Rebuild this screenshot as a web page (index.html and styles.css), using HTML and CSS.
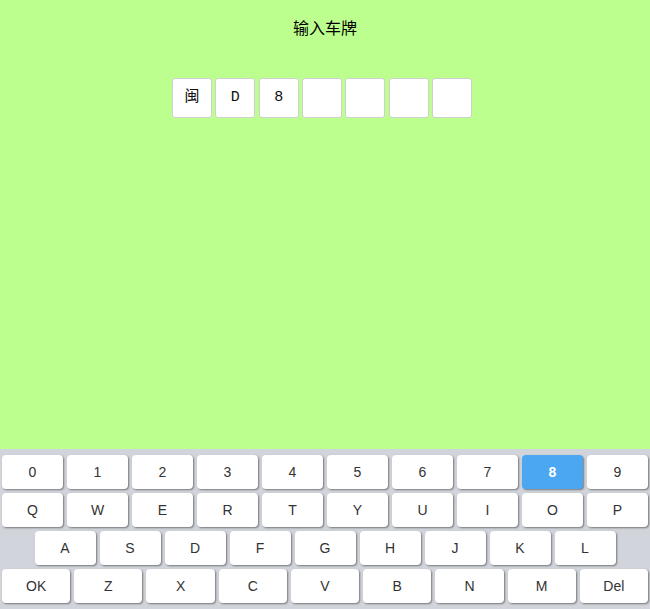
FILE: index.html
```html
<!DOCTYPE html>
<html lang="zh-CN">
<head>
    <meta charset="UTF-8">
    <title>输入车牌</title>
    <link rel="stylesheet" href="styles.css">
</head>
<body>
    <div class="page">
        <h2 class="title">输入车牌</h2>
        <div class="plate">
            <div class="cell">闽</div>
            <div class="cell">D</div>
            <div class="cell">8</div>
            <div class="cell"></div>
            <div class="cell"></div>
            <div class="cell"></div>
            <div class="cell"></div>
        </div>
    </div>
    <div class="keyboard">
        <div class="row">
            <div class="key">0</div>
            <div class="key">1</div>
            <div class="key">2</div>
            <div class="key">3</div>
            <div class="key">4</div>
            <div class="key">5</div>
            <div class="key">6</div>
            <div class="key">7</div>
            <div class="key active">8</div>
            <div class="key">9</div>
        </div>
        <div class="row">
            <div class="key">Q</div>
            <div class="key">W</div>
            <div class="key">E</div>
            <div class="key">R</div>
            <div class="key">T</div>
            <div class="key">Y</div>
            <div class="key">U</div>
            <div class="key">I</div>
            <div class="key">O</div>
            <div class="key">P</div>
        </div>
        <div class="row">
            <div class="key">A</div>
            <div class="key">S</div>
            <div class="key">D</div>
            <div class="key">F</div>
            <div class="key">G</div>
            <div class="key">H</div>
            <div class="key">J</div>
            <div class="key">K</div>
            <div class="key">L</div>
        </div>
        <div class="row row-wide">
            <div class="key">OK</div>
            <div class="key">Z</div>
            <div class="key">X</div>
            <div class="key">C</div>
            <div class="key">V</div>
            <div class="key">B</div>
            <div class="key">N</div>
            <div class="key">M</div>
            <div class="key">Del</div>
        </div>
    </div>
</body>
</html>
```

FILE: styles.css
```css
html, body {
    margin: 0;
    height: 100%;
}
body {
    background: #bdff8f;
    display: flex;
    flex-direction: column;
    font-family: "Liberation Sans", Arial, "Noto Sans CJK SC", sans-serif;
}
.page {
    flex: 1;
}
.title {
    margin: 17px 0 0 0;
    height: 20px;
    line-height: 20px;
    font-size: 16px;
    font-weight: normal;
    text-align: center;
    color: #000;
    font-family: "Noto Sans CJK SC", sans-serif;
}
.plate {
    display: flex;
    gap: 3.33px;
    padding-left: 172px;
    margin-top: 41px;
}
.cell {
    width: 38px;
    height: 38px;
    line-height: 38px;
    background: #fff;
    border: 1px solid #cfcfcf;
    border-radius: 3px;
    text-align: center;
    font-size: 15px;
    font-family: "Liberation Mono", "Noto Sans CJK SC", monospace;
    color: #111;
}
.keyboard {
    background: #d1d5db;
    padding: 4px 0;
}
.row {
    display: flex;
    justify-content: center;
}
.key {
    flex: 0 0 61px;
    margin: 2px;
    height: 34px;
    line-height: 34px;
    background: #fff;
    border-radius: 4px;
    box-shadow: 1px 1px 2px rgba(0,0,0,0.45);
    text-align: center;
    font-size: 14px;
    color: #333;
}
.row-wide .key {
    flex: 1 1 0;
}
.key.active {
    background: #4ba7f1;
    color: #fff;
    font-weight: bold;
}
```
